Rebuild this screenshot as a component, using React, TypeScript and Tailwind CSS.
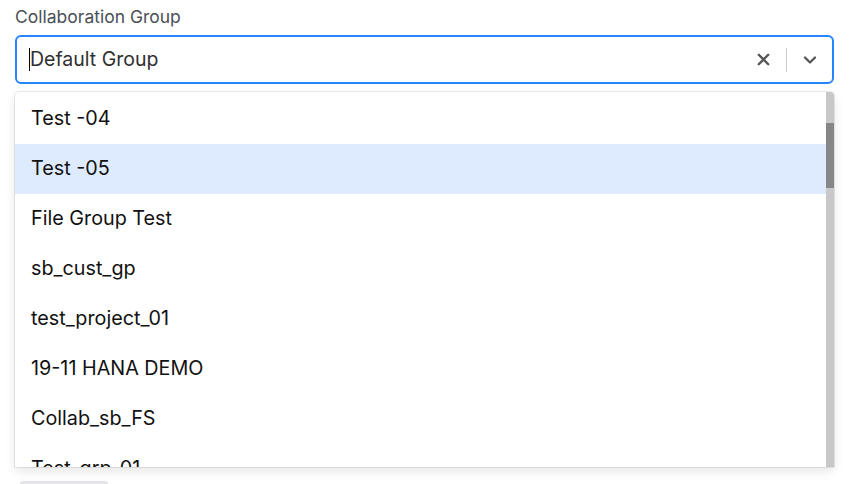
import { X, ChevronDown } from 'lucide-react'

const groups = [
  'Test -04',
  'Test -05',
  'File Group Test',
  'sb_cust_gp',
  'test_project_01',
  '19-11 HANA DEMO',
  'Collab_sb_FS',
  'Test_grp_01',
]

export default function App() {
  return (
    <div className="h-[484px] w-[849px] overflow-hidden bg-white font-['Inter',sans-serif]">
      <div className="px-[15px] pt-[5px]">
        {/* Label */}
        <label className="block text-[17.5px] leading-[24px] text-[#4a4f57]">Collaboration Group</label>

        {/* Select control */}
        <div className="mt-[6px] flex h-[49px] w-[819px] items-center rounded-[6px] border-2 border-[#2684ff] bg-white">
          <div className="flex flex-1 items-center pl-[12px]">
            <span className="h-[23px] w-px bg-black" />
            <span className="text-[19.5px] text-[#2f2f2f]">Default Group</span>
          </div>
          <div className="flex items-center">
            <button className="flex h-[38px] w-[46px] items-center justify-center text-[#555]">
              <X className="h-[19px] w-[19px]" strokeWidth={3} />
            </button>
            <span className="h-[24px] w-px bg-[#cccccc]" />
            <button className="flex h-[38px] w-[45px] items-center justify-center text-[#555]">
              <ChevronDown className="h-[20px] w-[20px]" strokeWidth={2.75} />
            </button>
          </div>
        </div>

        {/* Menu */}
        <div className="mt-[8px] flex h-[375px] w-[819px] overflow-hidden rounded-t-[4px] bg-white shadow-[0_0_0_1px_rgba(0,0,0,0.08),0_4px_11px_rgba(0,0,0,0.1)]">
          <div className="flex-1 pt-[2px]">
            {groups.map((g, i) => (
              <div
                key={g}
                className={`flex h-[50px] items-center px-[16px] text-[19.75px] text-[#111] ${i === 1 ? 'bg-[#deebff]' : ''}`}
              >
                {g}
              </div>
            ))}
          </div>
          <div className="relative w-[8px] bg-[#c8c8c8]">
            <div className="absolute left-0 top-[31px] h-[65px] w-[8px] bg-[#868686]" />
          </div>
        </div>

        <div className="ml-[5px] mt-[14px] h-[3px] w-[88px] rounded-t-[3px] bg-[#e4e4ea]" />
      </div>
    </div>
  )
}
